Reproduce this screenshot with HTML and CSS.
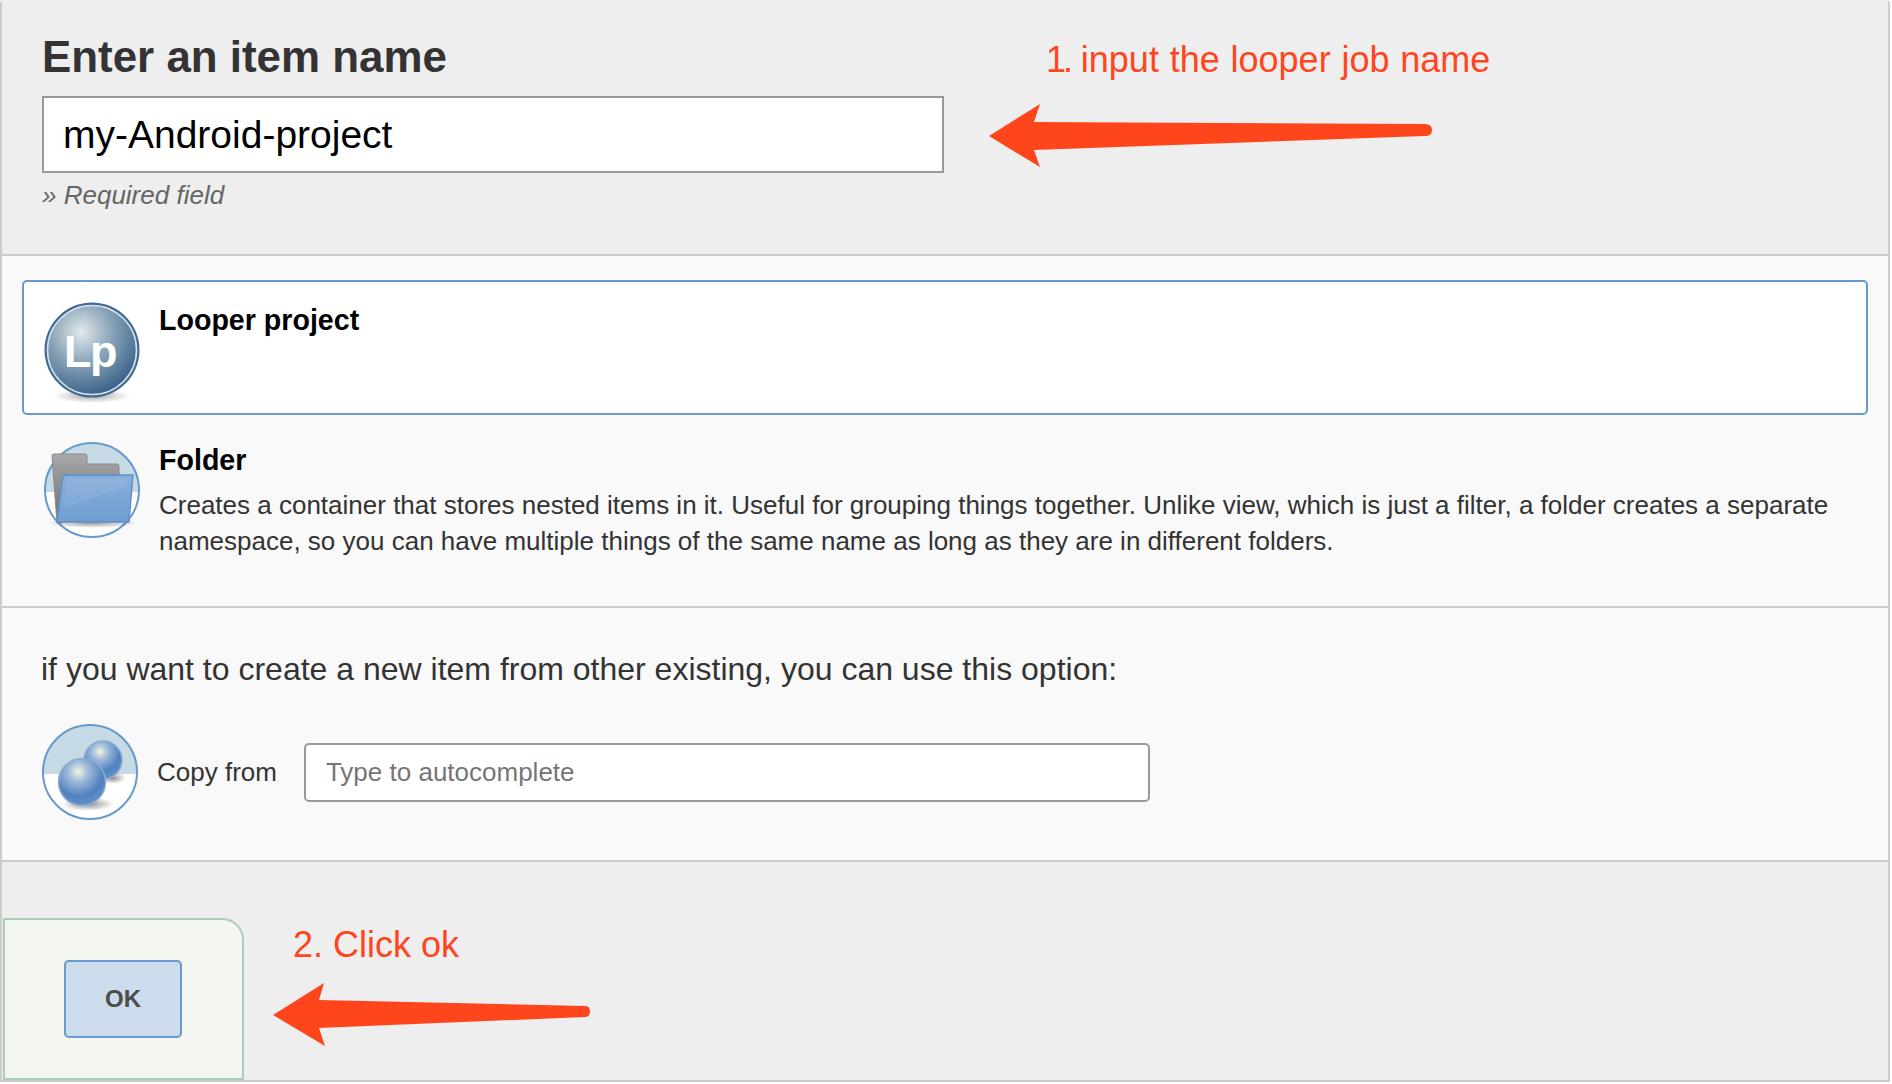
FILE: index.html
```html
<!DOCTYPE html>
<html lang="en">
<head>
  <meta charset="UTF-8">
  <title>New Item</title>
  <link rel="stylesheet" href="styles.css">
</head>
<body>

<div class="page">
  <section class="header">
    <h1>Enter an item name</h1>
    <input class="name-input" type="text" value="my-Android-project">
    <div class="required">» Required field</div>
  </section>

  <section class="items">
    <div class="item selected">
      <svg class="icon" viewBox="0 0 96 96">
        <defs>
          <radialGradient id="lpBall" cx="0.38" cy="0.3" r="0.72">
            <stop offset="0" stop-color="#e2e8ec"/>
            <stop offset="0.45" stop-color="#8fa8bb"/>
            <stop offset="1" stop-color="#3a638b"/>
          </radialGradient>
          <radialGradient id="lpShadow">
            <stop offset="0" stop-color="#000" stop-opacity="0.35"/>
            <stop offset="1" stop-color="#000" stop-opacity="0"/>
          </radialGradient>
        </defs>
        <ellipse cx="48" cy="94" rx="38" ry="7" fill="url(#lpShadow)"/>
        <circle cx="48" cy="48" r="47.5" fill="#3f6a94"/>
        <circle cx="48" cy="48" r="44.5" fill="url(#lpBall)" stroke="#d5dfe8" stroke-width="1.6"/>
        <text class="lp-text" x="20" y="65">Lp</text>
      </svg>
      <div class="item-text">
        <div class="item-title">Looper project</div>
      </div>
    </div>

    <div class="item">
      <svg class="icon" viewBox="0 0 96 96">
        <defs>
          <clipPath id="folderCircle"><circle cx="48" cy="48" r="47"/></clipPath>
          <linearGradient id="folderBack" x1="0" y1="0" x2="0" y2="1">
            <stop offset="0" stop-color="#a8a8a8"/>
            <stop offset="1" stop-color="#6e6e6e"/>
          </linearGradient>
          <linearGradient id="folderFront" x1="0" y1="0" x2="0" y2="1">
            <stop offset="0" stop-color="#86aedb"/>
            <stop offset="1" stop-color="#6f9fd3"/>
          </linearGradient>
          <radialGradient id="folderShadow">
            <stop offset="0" stop-color="#000" stop-opacity="0.4"/>
            <stop offset="1" stop-color="#000" stop-opacity="0"/>
          </radialGradient>
        </defs>
        <g clip-path="url(#folderCircle)">
          <rect width="96" height="96" fill="#fff"/>
          <rect width="96" height="50" fill="#c5dae4"/>
        </g>
        <circle cx="48" cy="48" r="47" fill="none" stroke="#6699cc" stroke-width="2"/>
        <ellipse cx="48" cy="81" rx="46" ry="5" fill="url(#folderShadow)"/>
        <path d="M8 14q0-2 2-2h31q2 0 2 2v8h30q2 0 2 2v20L18 81H13z" fill="url(#folderBack)" stroke="#8a8a8a"/>
        <path d="M19 33H89L85 80H13z" fill="url(#folderFront)" stroke="#5f8fc6" stroke-width="1.4"/>
        <path d="M22 36H85L83 44 20 66z" fill="#fff" opacity="0.08"/>
      </svg>
      <div class="item-text">
        <div class="item-title">Folder</div>
        <div class="item-desc">Creates a container that stores nested items in it. Useful for grouping things together. Unlike view, which is just a filter, a folder creates a separate namespace, so you can have multiple things of the same name as long as they are in different folders.</div>
      </div>
    </div>
  </section>

  <section class="copy">
    <p class="copy-hint">if you want to create a new item from other existing, you can use this option:</p>
    <div class="copy-row">
      <svg class="icon" viewBox="0 0 96 96">
        <defs>
          <clipPath id="copyCircle"><circle cx="48" cy="48" r="47"/></clipPath>
          <radialGradient id="sphere" cx="0.42" cy="0.28" r="0.7">
            <stop offset="0" stop-color="#f5f4da"/>
            <stop offset="0.3" stop-color="#9fbbdb"/>
            <stop offset="0.75" stop-color="#4f82bf"/>
            <stop offset="1" stop-color="#5f8fc6"/>
          </radialGradient>
          <radialGradient id="copyShadow">
            <stop offset="0" stop-color="#000" stop-opacity="0.45"/>
            <stop offset="1" stop-color="#000" stop-opacity="0"/>
          </radialGradient>
        </defs>
        <g clip-path="url(#copyCircle)">
          <rect width="96" height="96" fill="#fff"/>
          <rect width="96" height="50" fill="#c5dae4"/>
        </g>
        <circle cx="48" cy="48" r="47" fill="none" stroke="#6699cc" stroke-width="2"/>
        <ellipse cx="46" cy="80" rx="26" ry="7" fill="url(#copyShadow)"/>
        <ellipse cx="70" cy="54" rx="14" ry="6" fill="url(#copyShadow)"/>
        <circle cx="61" cy="36" r="19" fill="url(#sphere)" stroke="#8fabcf" stroke-width="1.5"/>
        <circle cx="40" cy="58" r="23.5" fill="url(#sphere)" stroke="#8fabcf" stroke-width="1.5"/>
      </svg>
      <label class="copy-label" for="from">Copy from</label>
      <input class="copy-input" id="from" type="text" placeholder="Type to autocomplete">
    </div>
  </section>

  <section class="footer">
    <div class="ok-box">
      <button class="ok-btn" type="button">OK</button>
    </div>
  </section>

  <div class="note note-one"><span class="note-num">1.</span> input the looper job name</div>
  <svg class="arrow arrow-one" viewBox="0 0 444 65">
    <path d="M0 32 51 0 45 18 436 20Q443 20 443 26 443 32 436 32L45 46 51 63z"/>
  </svg>
  <div class="note note-two">2. Click ok</div>
  <svg class="arrow arrow-two" viewBox="0 0 318 65">
    <path d="M0 32 51 0 46 17 312 23Q317 23 317 28 317 34 312 34L46 45 52 63z"/>
  </svg>
</div>

</body>
</html>
```

FILE: styles.css
```css
body {
  margin: 0;
  font-family: "Liberation Sans", Arial, sans-serif;
  background-color: #fff;
  color: #333;
}
.page {
  position: relative;
  margin-right: 2px;
  border-left: 2px solid #ccc;
  border-right: 2px solid #ccc;
  border-radius: 4px 4px 0 0;
  background-color: #f9f9f9;
}
section {
  border-bottom: 2px solid #ccc;
}

.header {
  box-sizing: border-box;
  height: 256px;
  padding: 33px 0 0 40px;
  background-color: #eee;
}
h1 {
  margin: 0 0 15px;
  font-size: 43.9px;
  line-height: 48px;
  font-weight: bold;
  color: #333;
}
.name-input {
  display: block;
  box-sizing: border-box;
  width: 902px;
  height: 77px;
  padding: 0 19px;
  border: 2px solid #999;
  background-color: #fff;
  font-family: inherit;
  font-size: 39px;
  color: #000;
  outline: none;
}
.required {
  margin-top: 7px;
  font-size: 26px;
  line-height: 30px;
  font-style: italic;
  color: #666;
}

.items {
  padding: 24px 20px 30px;
}
.item {
  display: flex;
  box-sizing: border-box;
  min-height: 135px;
  padding: 20px 20px 15px;
  border: 2px solid transparent;
  border-radius: 5px;
}
.item + .item {
  margin-top: 5px;
}
.item.selected {
  border-color: #6699cc;
  background-color: #fff;
}
.icon {
  flex: none;
  width: 96px;
  height: 96px;
  overflow: visible;
}
.lp-text {
  font-family: "Liberation Sans", Arial, sans-serif;
  font-size: 45px;
  font-weight: bold;
  letter-spacing: -1.5px;
  fill: #fff;
}
.item-text {
  margin-left: 19px;
  padding-top: 2px;
}
.item-title {
  font-size: 28.6px;
  line-height: 32px;
  font-weight: bold;
  color: #000;
}
.item-desc {
  margin-top: 11px;
  font-size: 26px;
  line-height: 36px;
  color: #333;
}

.copy {
  box-sizing: border-box;
  height: 254px;
  padding: 43px 0 0 39px;
}
.copy-hint {
  margin: 0 0 37px;
  font-size: 32px;
  line-height: 36px;
}
.copy-row {
  display: flex;
  align-items: center;
  margin-left: 1px;
}
.copy-label {
  margin-left: 19px;
  font-size: 26px;
}
.copy-input {
  box-sizing: border-box;
  width: 846px;
  height: 59px;
  margin-left: 27px;
  padding: 0 20px;
  border: 2px solid #999;
  border-radius: 5px;
  background-color: #fff;
  font-family: inherit;
  font-size: 26px;
  outline: none;
}
.copy-input::placeholder {
  color: #757575;
}

.footer {
  box-sizing: border-box;
  height: 220px;
  padding: 56px 0 0 1px;
  background-color: #eee;
}
.ok-box {
  display: flex;
  align-items: center;
  justify-content: center;
  box-sizing: border-box;
  width: 241px;
  height: 162px;
  padding-right: 1px;
  border: 2px solid #a9cfb9;
  border-radius: 0 22px 0 0;
  background-color: #f4f6f0;
}
.ok-btn {
  width: 118px;
  height: 78px;
  border: 2px solid #6699cc;
  border-radius: 5px;
  background-color: #ccdcec;
  font-family: inherit;
  font-size: 24px;
  font-weight: bold;
  color: #4d4d4d;
}

/* annotations drawn on top of the screenshot */
.note {
  position: absolute;
  font-size: 36px;
  line-height: 42px;
  color: #ff4520;
}
.note-num {
  letter-spacing: -3px;
}
.note-one {
  left: 1044px;
  top: 39px;
  word-spacing: 0.8px;
}
.note-two {
  left: 291px;
  top: 924px;
}
.arrow {
  position: absolute;
  fill: #ff451c;
}
.arrow-one {
  left: 987px;
  top: 104px;
  width: 444px;
  height: 65px;
}
.arrow-two {
  left: 271px;
  top: 983px;
  width: 318px;
  height: 65px;
}
```
